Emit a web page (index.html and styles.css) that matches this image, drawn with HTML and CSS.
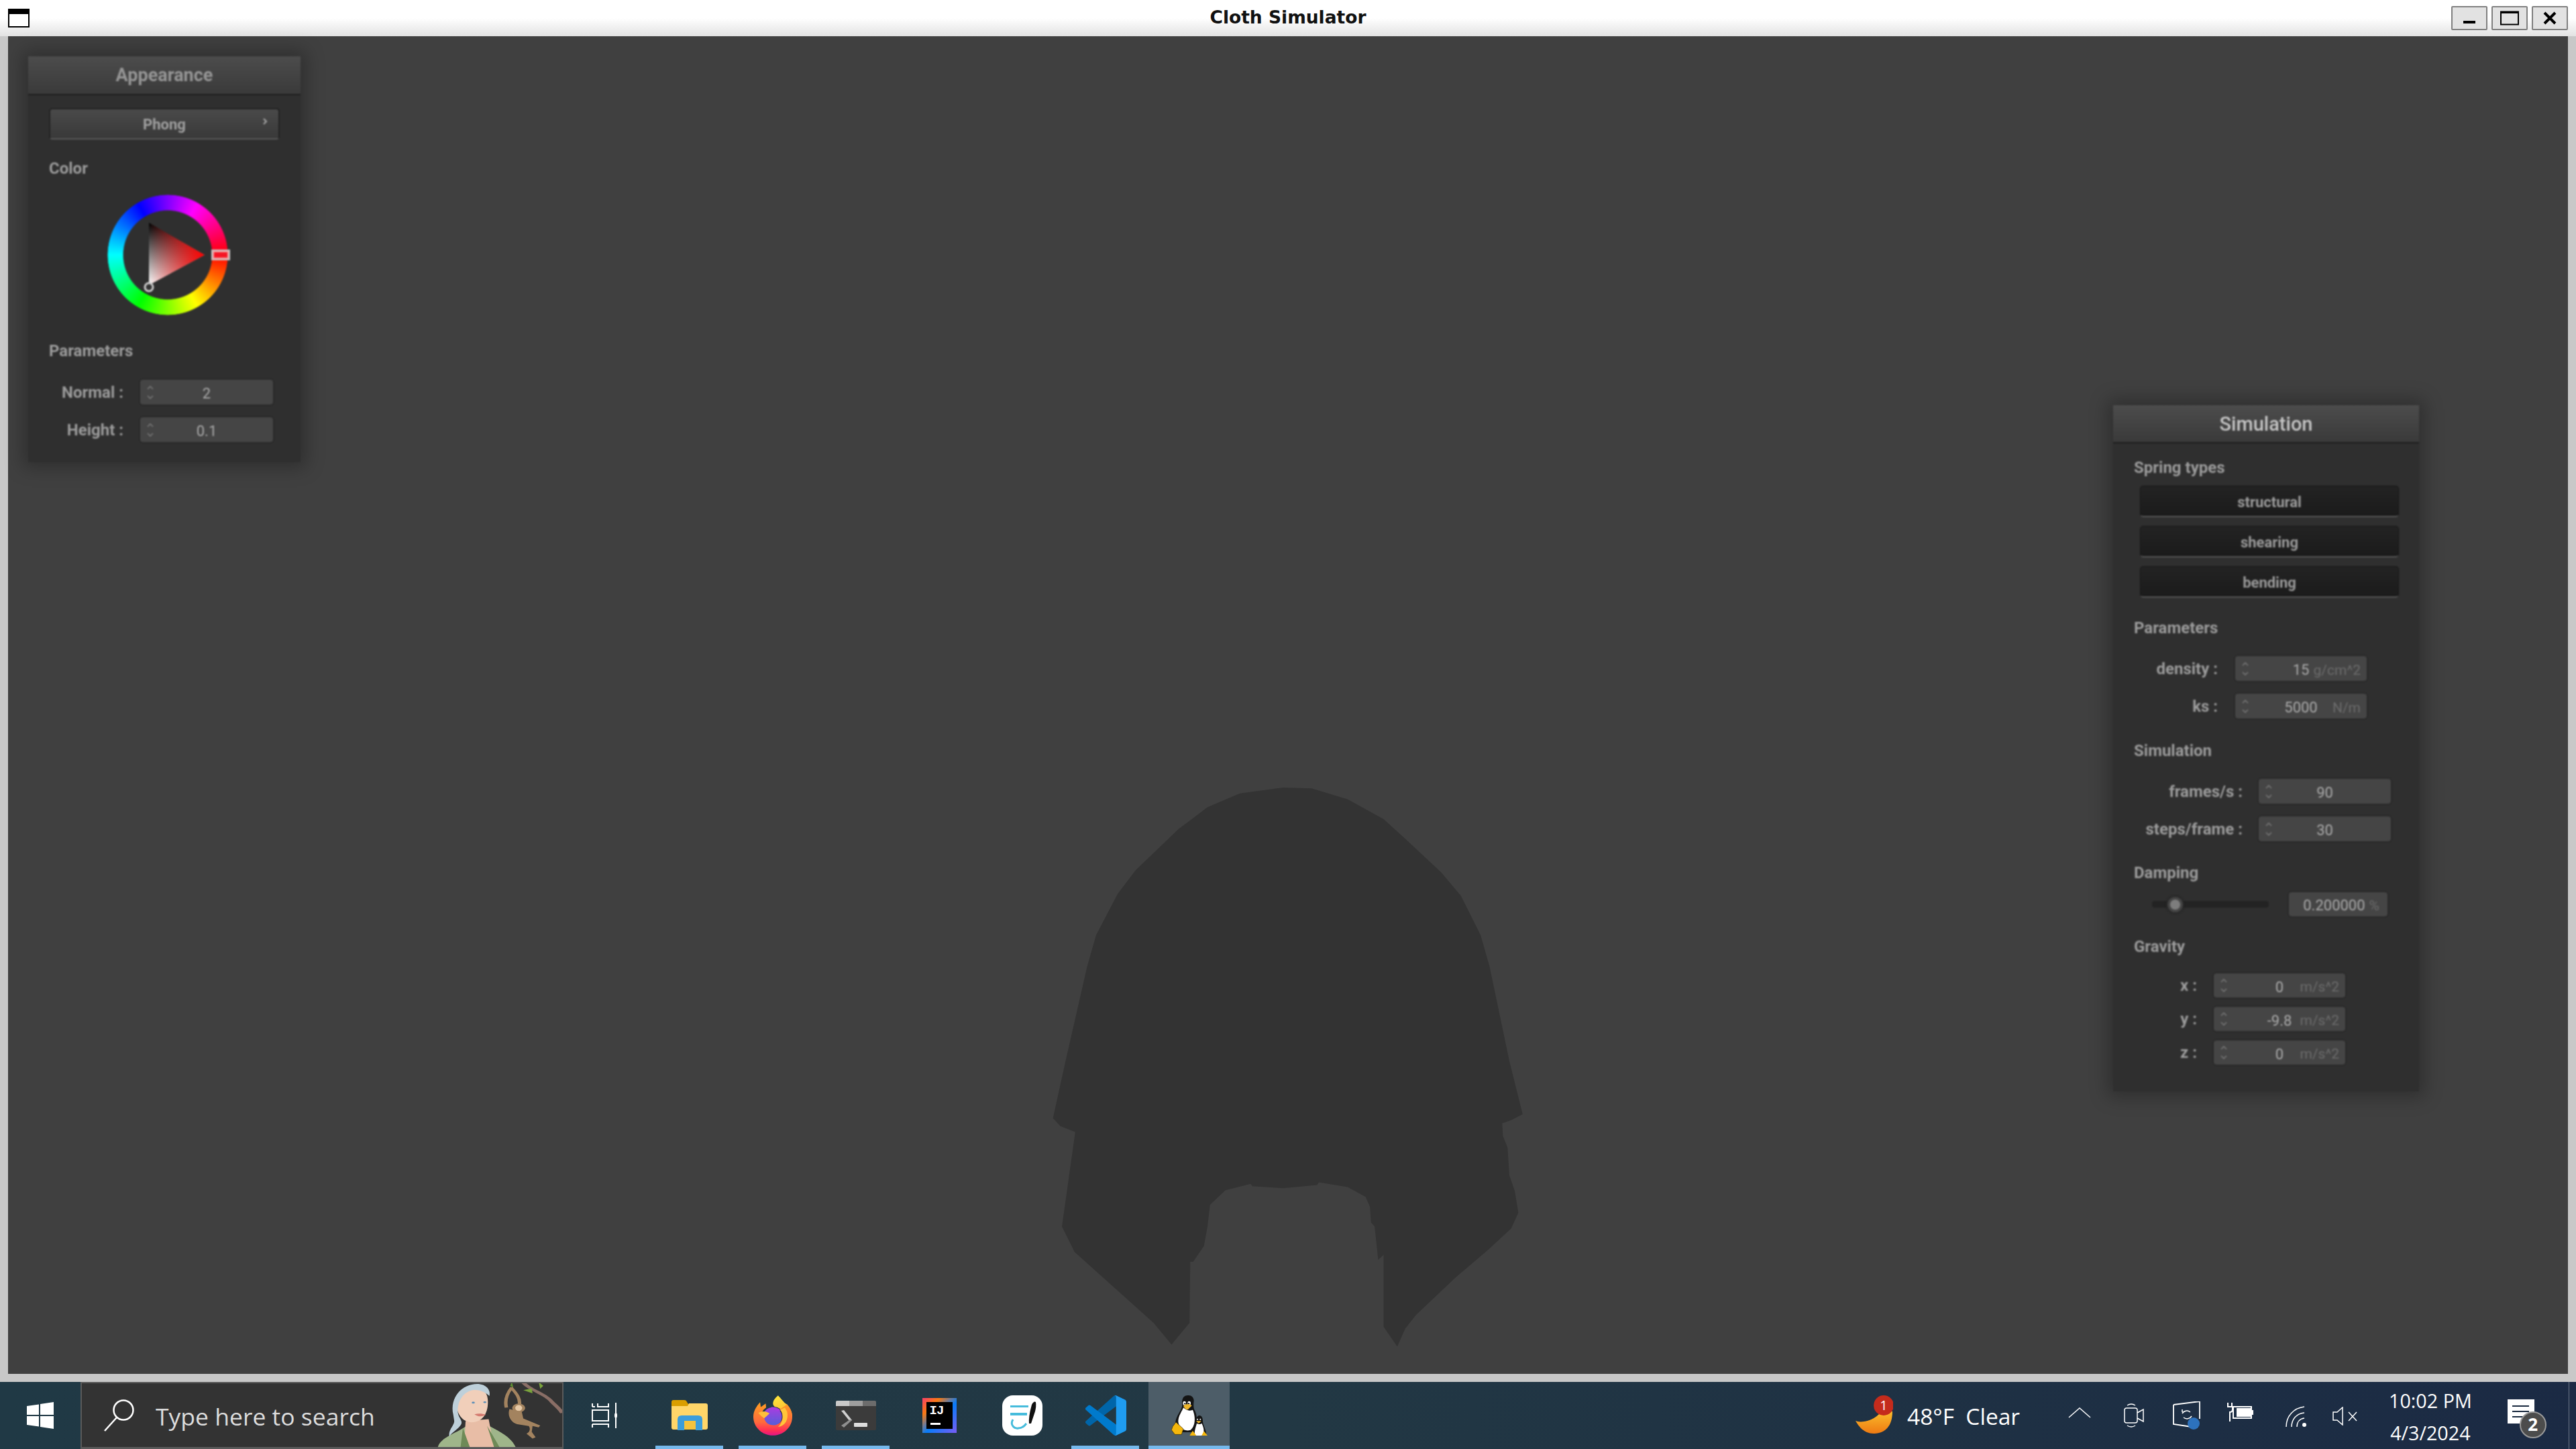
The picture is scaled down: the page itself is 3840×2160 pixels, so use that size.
FILE: index.html
```html
<!DOCTYPE html>
<html lang="en">
<head>
  <meta charset="UTF-8">
  <title>Cloth Simulator</title>
  <link rel="stylesheet" href="styles.css">
</head>
<body>
  <div class="window">
    <div class="titlebar">
      <span class="win-icon"></span>
      <span class="win-title">Cloth Simulator</span>
      <div class="win-buttons">
        <button class="win-btn"><svg width="20" height="20" viewBox="0 0 20 20"><rect x="1" y="14" width="18" height="4"/></svg></button>
        <button class="win-btn"><svg width="28" height="22" viewBox="0 0 28 22"><path d="M1 1.5h26v19H1zM1 3h26" fill="none" stroke="#000" stroke-width="2"/><rect x="1" y="1" width="26" height="3"/></svg></button>
        <button class="win-btn"><svg width="20" height="20" viewBox="0 0 20 20"><path d="M2 2l16 16M18 2L2 18" stroke="#000" stroke-width="4" fill="none"/></svg></button>
      </div>
    </div>

    <div class="canvas">
      <svg class="cloth" width="840" height="920" viewBox="0 0 1568 1568" preserveAspectRatio="none">
        <path fill="#333333" d="M770 75L850 77 950 105 1050 155 1110 205 1210 290 1265 350 1320 450 1345 530 1400 770 1437 905 1405 920 1380 928 1382 960 1395 990 1400 1060 1415 1100 1425 1155 1405 1195 1340 1250 1250 1320 1140 1415 1110 1450 1088 1495 1050 1445 1050 1262 1035 1275 1025 1190 1015 1180 1012 1140 1000 1115 950 1090 870 1078 865 1085 770 1093 685 1088 680 1082 610 1098 567 1135 560 1190 550 1240 520 1280 512 1280 510 1435 460 1490 410 1435 190 1255 155 1190 192 950 150 935 130 915 165 770 225 530 250 450 310 345 360 285 480 180 560 125 650 90Z"/>
      </svg>

      <section class="panel panel-appearance">
        <header class="panel-title">Appearance</header>
        <div class="panel-body">
          <button class="popup-btn"><span class="btn-text">Phong</span><svg class="popup-arrow" width="8" height="12" viewBox="0 0 8 12"><path d="M2 2l4 4-4 4" fill="none" stroke="#aaa" stroke-width="2"/></svg></button>
          <div class="group-label label-color">Color</div>
          <div class="wheel">
            <div class="wheel-ring"></div>
            <svg class="wheel-marks" width="200" height="180" viewBox="160 290 200 180">
              <defs>
                <linearGradient id="tri-grey" x1="0" y1="0" x2="0" y2="1">
                  <stop offset="0" stop-color="#000"/>
                  <stop offset="1" stop-color="#fff"/>
                </linearGradient>
                <linearGradient id="tri-red" x1="0" y1="0" x2="1" y2="0">
                  <stop offset="0" stop-color="#f00" stop-opacity="0"/>
                  <stop offset="1" stop-color="#f00"/>
                </linearGradient>
              </defs>
              <polygon points="222,332 305,380 222,425" fill="url(#tri-grey)"/>
              <polygon points="222,332 305,380 222,425" fill="url(#tri-red)"/>
              <rect x="316" y="373" width="26" height="14" fill="none" stroke="#c4c4c4" stroke-width="2"/>
              <rect x="318" y="375" width="22" height="10" fill="#f51525" stroke="#f5a0a0" stroke-width="2"/>
              <circle cx="222" cy="428" r="6" fill="#333" stroke="#ccc" stroke-width="3"/>
            </svg>
          </div>
          <div class="group-label label-params-a">Parameters</div>
          <div class="field-row fields-a row-first">
            <span class="field-label">Normal :</span>
            <div class="num-box"><svg class="spin" width="10" height="22" viewBox="0 0 10 22"><path d="M1 6l4-4 4 4M1 16l4 4 4-4"/></svg><span class="num-val">2</span></div>
          </div>
          <div class="field-row fields-a row-next">
            <span class="field-label">Height :</span>
            <div class="num-box"><svg class="spin" width="10" height="22" viewBox="0 0 10 22"><path d="M1 6l4-4 4 4M1 16l4 4 4-4"/></svg><span class="num-val">0.1</span></div>
          </div>
        </div>
      </section>

      <section class="panel panel-simulation">
        <header class="panel-title">Simulation</header>
        <div class="panel-body">
          <div class="group-label label-spring">Spring types</div>
          <div class="toggle-list">
            <button class="toggle-btn"><span class="btn-text">structural</span></button>
            <button class="toggle-btn"><span class="btn-text">shearing</span></button>
            <button class="toggle-btn"><span class="btn-text">bending</span></button>
          </div>

          <div class="group-label label-params">Parameters</div>
          <div class="field-row fields-params row-first">
            <span class="field-label">density :</span>
            <div class="num-box"><svg class="spin" width="10" height="22" viewBox="0 0 10 22"><path d="M1 6l4-4 4 4M1 16l4 4 4-4"/></svg><span class="num-val">15</span><span class="num-unit">g/cm^2</span></div>
          </div>
          <div class="field-row fields-params row-next">
            <span class="field-label">ks :</span>
            <div class="num-box"><svg class="spin" width="10" height="22" viewBox="0 0 10 22"><path d="M1 6l4-4 4 4M1 16l4 4 4-4"/></svg><span class="num-val">5000</span><span class="num-unit">N/m</span></div>
          </div>

          <div class="group-label label-sim">Simulation</div>
          <div class="field-row fields-sim row-first">
            <span class="field-label">frames/s :</span>
            <div class="num-box"><svg class="spin" width="10" height="22" viewBox="0 0 10 22"><path d="M1 6l4-4 4 4M1 16l4 4 4-4"/></svg><span class="num-val">90</span></div>
          </div>
          <div class="field-row fields-sim row-next">
            <span class="field-label">steps/frame :</span>
            <div class="num-box"><svg class="spin" width="10" height="22" viewBox="0 0 10 22"><path d="M1 6l4-4 4 4M1 16l4 4 4-4"/></svg><span class="num-val">30</span></div>
          </div>

          <div class="group-label label-damping">Damping</div>
          <div class="slider-row">
            <div class="slider-track"><span class="slider-knob" style="left: 20%"></span></div>
            <div class="slider-value"><span>0.200000</span><span class="num-unit">%</span></div>
          </div>

          <div class="group-label label-gravity">Gravity</div>
          <div class="field-row fields-gravity row-gravity-first">
            <span class="field-label">x :</span>
            <div class="num-box"><svg class="spin" width="10" height="22" viewBox="0 0 10 22"><path d="M1 6l4-4 4 4M1 16l4 4 4-4"/></svg><span class="num-val">0</span><span class="num-unit">m/s^2</span></div>
          </div>
          <div class="field-row fields-gravity row-gravity">
            <span class="field-label">y :</span>
            <div class="num-box"><svg class="spin" width="10" height="22" viewBox="0 0 10 22"><path d="M1 6l4-4 4 4M1 16l4 4 4-4"/></svg><span class="num-val">-9.8</span><span class="num-unit">m/s^2</span></div>
          </div>
          <div class="field-row fields-gravity row-gravity">
            <span class="field-label">z :</span>
            <div class="num-box"><svg class="spin" width="10" height="22" viewBox="0 0 10 22"><path d="M1 6l4-4 4 4M1 16l4 4 4-4"/></svg><span class="num-val">0</span><span class="num-unit">m/s^2</span></div>
          </div>
        </div>
      </section>
    </div>
  </div>

  <footer class="taskbar">
    <div class="start">
      <svg width="40" height="40" viewBox="0 0 40 40"><path fill="#fff" d="M0 6l18-2.6V19H0zM20 3.100L40 0v19H20zM0 21h18v15.600L0 34zM20 21h20v19l-20-3.100z"/></svg>
    </div>

    <div class="search">
      <svg class="search-icon" width="48" height="48" viewBox="0 0 48 48"><circle cx="30" cy="16" r="14.500" fill="none" stroke="#fff" stroke-width="2.500"/><path d="M20 27L2 47" stroke="#fff" stroke-width="2.500" fill="none"/></svg>
      <span class="search-text">Type here to search</span>
      <svg class="doodle" width="191" height="98" viewBox="1130 90 333 295" preserveAspectRatio="none">
        <path fill="none" stroke="#8a6e66" stroke-width="11" d="M1360 92c18 38 60 55 76 90 10 18 20 30 27 50"/>
        <path fill="#7aa33c" d="M1362 130l22-8 2 22zM1402 94l12 16-8 14z"/>
        <path fill="#5d8f33" d="M1332 90l4 28-8-6z"/>
        <path fill="none" stroke="#a3835f" stroke-width="9" d="M1330 118c16 30 24 50 22 76"/>
        <path fill="none" stroke="#a3835f" stroke-width="9" d="M1332 118c-14 30-18 60-14 90"/>
        <ellipse cx="1350" cy="210" rx="17" ry="20" fill="#a3835f"/>
        <ellipse cx="1350" cy="210" rx="9" ry="13" fill="#e6c9a6"/>
        <path fill="#a3835f" d="M1326 215c-6 30 4 60 20 68l30 8c6 10 2 30-6 34l16 22 8-6-10-24 2-26 16 6 4-8-44-32-4-30z"/>
        <path fill="#9fb58a" d="M1140 385c8-45 48-62 72-92l58-6c28 26 60 52 72 98z"/>
        <path fill="#e8bda6" d="M1212 268l-4 117h78l-14-125z"/>
        <path fill="#6e8a57" d="M1205 300l18 85h-24zM1268 290l18 95h14z"/>
        <path fill="#f1cfba" d="M1188 190c0-45 30-70 50-70 22 0 32 24 32 64 0 50-14 90-42 90-24 0-40-40-40-84z"/>
        <path fill="#bed0da" d="M1180 240c-10-80 24-138 62-138 24 0 36 28 32 54-14-22-30-30-44-26-24 8-40 50-38 100 2 30 18 40 4 64-8 16-22 30-26 44-4-34 16-52 12-76z"/>
        <path fill="#d47a70" d="M1235 238c10-4 20-4 30 2-8 10-22 10-30-2z"/>
        <circle cx="1232" cy="186" r="4" fill="#5b8fb8"/><circle cx="1262" cy="184" r="4" fill="#5b8fb8"/>
      </svg>
    </div>

    <div class="tasks">
      <div class="task">
        <svg class="taskview" width="38" height="38" viewBox="0 0 38 38" fill="none" stroke="#fff" stroke-width="2"><path d="M1 6h4M1 1v5M9 1v5h16V1M1 32v5M1 32h24v5M36 0v38"/><rect x="1" y="11" width="24" height="16"/><ellipse cx="36" cy="19" rx="1" ry="3" fill="#fff"/></svg>
      </div>
      <div class="task running">
        <svg width="54" height="46" viewBox="0 0 54 46"><path fill="#d99e00" d="M0 3q0-3 3-3h16q3 0 4 3l2 3h4v5H0z"/><path fill="#ffd669" d="M0 9h24l2-4h25q3 0 3 3v33q0 3-3 3H3q-3 0-3-3z"/><path fill="#3c9ddb" d="M9 45V29q0-6 6-6h25q6 0 6 6v16H36V31H19v14z"/><rect x="19" y="31" width="17" height="13" fill="#f5c33e"/></svg>
      </div>
      <div class="task running">
        <svg width="58" height="60" viewBox="40 30 173 178">
          <defs>
            <linearGradient id="fx-outer" x1="0.500" y1="0" x2="0.500" y2="1"><stop offset="0" stop-color="#ff9f22"/><stop offset=".6" stop-color="#ff6a3c"/><stop offset=".85" stop-color="#ff2d55"/><stop offset="1" stop-color="#e31587"/></linearGradient>
            <linearGradient id="fx-flame" x1="0.300" y1="0" x2="0.700" y2="1"><stop offset="0" stop-color="#ffe53c"/><stop offset="1" stop-color="#ffa62c"/></linearGradient>
            <linearGradient id="fx-orb" x1="0.500" y1="0" x2="0.500" y2="1"><stop offset="0" stop-color="#a93ce0"/><stop offset="1" stop-color="#5160d8"/></linearGradient>
          </defs>
          <path fill="url(#fx-flame)" d="M150 30C125 50 122 70 135 80 165 85 180 105 175 140L213 125C213 95 200 90 190 70 175 62 165 45 150 30Z"/>
          <circle cx="125" cy="125" r="42" fill="url(#fx-orb)"/>
          <path fill="url(#fx-outer)" d="M70 60L73 82 95 66 97 84C80 95 72 110 88 125 90 172 160 176 170 130 172 112 165 100 158 92L190 70C205 85 213 105 213 125 213 170 175 208 127 208 78 208 40 170 40 125 40 100 52 80 70 60Z"/>
          <path fill="#ffbf3a" d="M62 108C80 98 97 100 112 110 104 118 96 124 88 132 80 125 70 118 62 108Z"/>
          <path fill="#ffc53a" d="M160 94C176 114 174 150 150 170 182 166 198 136 190 102L180 84Z"/>
          <path fill="#a93ce0" d="M120 82c15-2 30 4 42 14l-14 4c-8-6-18-10-28-8z"/>
        </svg>
      </div>
      <div class="task running">
        <svg width="60" height="44" viewBox="0 0 60 44"><rect width="60" height="44" rx="2" fill="#3b3b3b"/><path fill="#c9c9c9" d="M0 2q0-2 2-2h18v8H0z"/><rect x="20" width="20" height="8" fill="#9e9e9e"/><path fill="#6c6c6c" d="M40 0h18q2 0 2 2v6H40z"/><path fill="#cfcfcf" d="M8 15l4-1 12 15-3 2z"/><path fill="#8f8f8f" d="M8 37l13-9 3 1-12 11z"/><rect x="27" y="33" width="20" height="6" rx="1" fill="#ddd"/></svg>
      </div>
      <div class="task">
        <div class="ij-icon"><div class="ij-inner"><span class="ij-text">IJ</span><span class="ij-bar"></span></div></div>
      </div>
      <div class="task">
        <svg width="60" height="60" viewBox="0 0 60 60"><rect width="60" height="60" rx="16" fill="#fff"/><rect x="12" y="15" width="27" height="3" fill="#46bcdc"/><rect x="12" y="26" width="25" height="4" fill="#46bcdc"/><path fill="#111" d="M44 14q3-6 6-4 1 6-1 14l-6 18-3 0q-1-10 4-28z"/><path fill="none" stroke="#46bcdc" stroke-width="3" d="M16 36c-5 8 2 14 8 13 5 0 9-3 12-7"/></svg>
      </div>
      <div class="task running">
        <svg width="61" height="60" viewBox="0 0 100 100" preserveAspectRatio="none">
          <path fill="#0065a9" d="M96.46 10.8 75.86.87c-2.39-1.15-5.24-.66-7.11 1.21L1.3 63.58c-1.81 1.65-1.81 4.51.01 6.16l5.51 5.01c1.49 1.35 3.72 1.45 5.32.24L93.36 13.37c2.72-2.07 6.64-.12 6.64 3.3v-.24c0-2.4-1.37-4.58-3.54-5.63z"/>
          <path fill="#007acc" d="M96.46 89.2 75.86 99.13c-2.39 1.15-5.24.66-7.11-1.21L1.3 36.42c-1.81-1.65-1.81-4.51.01-6.16l5.51-5.01c1.49-1.35 3.72-1.45 5.32-.24L93.36 86.63c2.72 2.07 6.64.12 6.64-3.3v.24c0 2.4-1.37 4.58-3.54 5.63z"/>
          <path fill="#1f9cf0" d="M75.86 99.13c-2.39 1.15-5.24.66-7.11-1.21 2.31 2.31 6.25.67 6.25-2.59V4.67c0-3.26-3.94-4.9-6.25-2.59 1.87-1.87 4.72-2.36 7.11-1.21l20.6 9.91c2.16 1.04 3.54 3.22 3.54 5.63v67.17c0 2.4-1.37 4.58-3.54 5.63z"/>
        </svg>
      </div>
      <div class="task running active">
        <svg width="54" height="60" viewBox="55 30 160 180">
          <path fill="#141414" d="M130 30C105 30 100 50 103 75 100 100 75 120 72 155L85 195H150C165 170 175 130 160 100 150 85 155 60 155 55 155 40 145 30 130 30Z"/>
          <path fill="#fff" d="M108 85C125 100 135 100 150 95 165 130 160 170 140 185 110 195 85 170 85 145 87 120 100 105 108 85Z"/>
          <ellipse cx="113" cy="65" rx="7" ry="9" fill="#fff"/><ellipse cx="134" cy="65" rx="7" ry="9" fill="#fff"/>
          <circle cx="115" cy="67" r="3.500"/><circle cx="132" cy="67" r="3.500"/>
          <path fill="#eeb52a" d="M108 77C120 66 135 68 146 76L128 94C120 95 112 86 108 77Z"/>
          <path fill="#f5b70c" stroke="#3a2a00" stroke-width="2" d="M75 150L108 180 100 205 70 205 55 185 60 170Z"/>
          <path fill="#141414" d="M178 120C165 125 165 140 160 155 150 175 145 190 150 208H210C212 185 195 165 195 145 195 130 190 120 178 120Z"/>
          <path fill="#fff" d="M168 155C175 160 185 160 190 155 200 175 205 195 190 210H160C155 190 165 170 168 155Z"/>
          <path fill="#eeb52a" d="M165 145H188L177 156Z"/>
          <circle cx="171" cy="137" r="3" fill="#fff"/><circle cx="184" cy="137" r="3" fill="#fff"/>
          <path fill="#f5b70c" d="M136 210L150 188 166 210ZM190 210L200 190 216 210Z"/>
        </svg>
      </div>
    </div>

    <div class="tray">
      <div class="weather">
        <svg class="weather-icon" width="56" height="58" viewBox="0 0 56 58">
          <defs><linearGradient id="moon" x1="0" y1="0" x2="0" y2="1"><stop offset="0" stop-color="#fbc02d"/><stop offset="1" stop-color="#ee7a12"/></linearGradient></defs>
          <path fill="url(#moon)" d="M0 38C8 42 30 38 40 22L55 24C55 45 45 57 27 57 12 57 4 45 0 38Z"/>
          <circle cx="42" cy="15" r="15" fill="#c42b1c"/>
        </svg>
        <span class="weather-badge">1</span>
        <span class="weather-text">48°F&nbsp; Clear</span>
      </div>
      <svg class="tray-chevron" width="34" height="16" viewBox="0 0 34 16"><path d="M1 15L17 1l16 14" fill="none" stroke="#fff" stroke-width="1.500"/></svg>
      <svg class="tray-icon tray-meet" width="30" height="36" viewBox="0 0 30 36" fill="none" stroke="#fff" stroke-width="1.500"><rect x="1" y="7" width="19" height="22" rx="3"/><path d="M20 14l9-5v18l-9-5M5 3q6-4 12 0M5 33q6 4 12 0"/></svg>
      <svg class="tray-icon tray-update" width="42" height="42" viewBox="0 0 42 42"><path fill="none" stroke="#fff" stroke-width="1.800" d="M1 5L40 0v26M28 38L1 34V5"/><path fill="none" stroke="#fff" stroke-width="1.500" d="M14 18a8 8 0 0 1 12-2M14 16v-4M28 22a8 8 0 0 1-12 2"/><circle cx="31" cy="33" r="9" fill="#2d72bd"/></svg>
      <svg class="tray-icon tray-power" width="40" height="28" viewBox="0 0 40 28" fill="none" stroke="#fff" stroke-width="2"><path d="M1 0v6M7 0v6M0 6h8v4q0 4-4 4v14"/><rect x="9" y="6" width="27" height="17"/><rect x="15" y="9" width="21" height="11" fill="#fff"/><rect x="37" y="11" width="2" height="7" fill="#fff" stroke="none"/></svg>
      <svg class="tray-icon tray-wifi" width="32" height="32" viewBox="0 0 32 32" fill="none" stroke="#fff" stroke-width="1.500"><path d="M1 31C1 15 12 3 28 1M9 31C9 20 16 11 28 10M17 31c0-7 4-12 11-13"/><circle cx="28" cy="28" r="3" fill="#fff" stroke="none"/></svg>
      <svg class="tray-icon tray-volume" width="38" height="28" viewBox="0 0 38 28" fill="none" stroke="#fff" stroke-width="1.500"><path d="M1 8h6L15 1v26l-8-7H1zM24 8l12 13M36 8L24 21"/></svg>
      <div class="clock">
        <span>10:02 PM</span>
        <span>4/3/2024</span>
      </div>
      <div class="notify">
        <svg width="40" height="36" viewBox="0 0 40 36"><rect width="40" height="36" fill="#fff"/><path d="M7 10h25M7 18h25M7 26h17" stroke="#1a2a40" stroke-width="2"/></svg>
        <span class="notify-badge">2</span>
      </div>
      <div class="show-desktop"></div>
    </div>
  </footer>
</body>
</html>
```

FILE: styles.css
```css
* {
  box-sizing: border-box;
}

html, body {
  margin: 0;
  padding: 0;
  width: 3840px;
  height: 2160px;
  overflow: hidden;
}

body {
  font-family: Roboto, "Liberation Sans", sans-serif;
  background: #c8c8c8;
  display: flex;
  flex-direction: column;
}

button {
  font-family: inherit;
  padding: 0;
}

/* window frame */
.window {
  height: 2060px;
  display: flex;
  flex-direction: column;
  background: #c8c8c8;
  border-bottom: 12px solid #c8c8c8;
}

.titlebar {
  height: 54px;
  flex: none;
  display: flex;
  align-items: center;
  position: relative;
  padding: 0 12px;
  background: linear-gradient(#ffffff 0%, #ffffff 50%, #e2e2e2 100%);
}

.win-icon {
  width: 32px;
  height: 28px;
  border: 2px solid #000;
  border-top-width: 8px;
  background: #fff;
}

.win-title {
  position: absolute;
  left: 0;
  right: 0;
  top: 10px;
  text-align: center;
  font-family: "DejaVu Sans", sans-serif;
  font-weight: bold;
  font-size: 26.500px;
  line-height: 32px;
  color: #111;
}

.win-buttons {
  margin-left: auto;
  display: flex;
  gap: 6px;
}

.win-btn {
  width: 54px;
  height: 36px;
  display: flex;
  align-items: center;
  justify-content: center;
  background: #e2e2e2;
  border: 2px solid #808080;
  border-radius: 2px;
}

.canvas {
  flex: 1;
  margin: 0 12px;
  background: #404040;
  position: relative;
}

.cloth {
  position: absolute;
  left: 1488px;
  top: 1076px;
}

/* nanogui-like panels */
.panel {
  position: absolute;
  background: #2f2f2f;
  box-shadow: 0 0 26px 8px rgba(0, 0, 0, 0.28);
  filter: blur(0.8px);
}

.panel-appearance {
  left: 30px;
  top: 30px;
  width: 406px;
}

.panel-simulation {
  left: 3138px;
  top: 550px;
  width: 456px;
}

.panel-title {
  height: 58px;
  display: flex;
  align-items: center;
  justify-content: center;
  background: linear-gradient(#4c4c4c, #3a3a3a);
  border-bottom: 2px solid #1e1e1e;
  font-weight: 700;
  font-size: 27px;
  color: #969696;
}

.panel-simulation .panel-title {
  height: 57px;
  font-weight: 500;
  font-size: 29px;
  color: #c6c6c6;
}

.panel-body {
  padding: 0 0 30px 31px;
}

.panel-simulation .panel-body {
  padding-bottom: 40px;
}

.group-label {
  height: 28px;
  line-height: 28px;
  font-weight: 700;
  font-size: 24px;
  color: #9c9c9c;
}

.label-color { margin-top: 29px; }
.label-params-a { margin-top: 39px; }
.label-spring { margin-top: 22px; }
.label-params { margin-top: 31px; }
.label-sim { margin-top: 34px; }
.label-damping { margin-top: 33px; }
.label-gravity { margin-top: 31px; }

.btn-text {
  position: relative;
  top: 1px;
}

.popup-btn {
  position: relative;
  display: block;
  margin-top: 19px;
  width: 344px;
  height: 47px;
  background: linear-gradient(#4a4a4a, #393939);
  border: 2px solid #222;
  border-bottom-color: #5a5a5a;
  border-radius: 5px;
  font-size: 22px;
  font-weight: 700;
  color: #a0a0a0;
}

.popup-arrow {
  position: absolute;
  right: 16px;
  top: 12px;
}

/* colour wheel */
.wheel {
  position: relative;
  width: 180px;
  height: 180px;
  margin: 25px 0 0 87px;
}

.wheel-ring {
  width: 180px;
  height: 180px;
  border-radius: 50%;
  background: conic-gradient(from 90deg, #f00, #ff0, #0f0, #0ff, #00f, #f0f, #f00);
  -webkit-mask: radial-gradient(closest-side, transparent 73%, #000 74.500%, #000 99%, transparent 100%);
  mask: radial-gradient(closest-side, transparent 73%, #000 74.500%, #000 99%, transparent 100%);
}

.wheel-marks {
  position: absolute;
  left: 0;
  top: 0;
}

/* number fields */
.field-row {
  display: grid;
  align-items: center;
  column-gap: 25px;
}

.fields-a { grid-template-columns: 111px 198px; height: 37px; }
.fields-params { grid-template-columns: 125px 196px; column-gap: 26px; height: 37px; }
.fields-sim { grid-template-columns: 162px 197px; column-gap: 24px; height: 37px; }
.fields-gravity { grid-template-columns: 94px 196px; height: 36px; }

.row-first { margin-top: 28px; }
.fields-a.row-first { margin-top: 29px; }
.row-next { margin-top: 19px; }
.row-gravity-first { margin-top: 26px; }
.row-gravity { margin-top: 14px; }

.field-label {
  text-align: right;
  font-weight: 700;
  font-size: 24px;
  color: #9c9c9c;
}

.num-box {
  height: 100%;
  position: relative;
  display: flex;
  align-items: center;
  justify-content: center;
  padding-top: 4px;
  background: #454545;
  border-radius: 4px;
  box-shadow: 0 0 0 2px #292929;
  font-size: 22px;
}

.spin {
  position: absolute;
  left: 10px;
  top: 50%;
  margin-top: -11px;
  fill: none;
  stroke: #7c7c7c;
  stroke-width: 1.500;
}

.num-val {
  color: #ababab;
}

.num-unit {
  color: #6c6c6c;
  font-size: 21px;
}

.num-box .num-unit {
  position: absolute;
  right: 9px;
}

/* spring toggles */
.toggle-list {
  display: flex;
  flex-direction: column;
  gap: 13px;
  margin: 13px 0 0 9px;
}

.toggle-btn {
  width: 386px;
  height: 47px;
  background: linear-gradient(#232323, #1b1b1b);
  border: 1px solid #151515;
  border-bottom: 2px solid #555;
  border-radius: 5px;
  font-size: 22px;
  font-weight: 700;
  color: #9c9c9c;
}

/* damping slider */
.slider-row {
  display: flex;
  align-items: center;
  height: 36px;
  margin-top: 15px;
  padding-left: 27px;
}

.slider-track {
  position: relative;
  width: 174px;
  height: 10px;
  background: #232323;
  border-radius: 4px;
}

.slider-knob {
  position: absolute;
  top: 50%;
  width: 23px;
  height: 23px;
  margin: -11.500px 0 0 -11.500px;
  border-radius: 50%;
  background: radial-gradient(circle, #7d7d7d 0 42%, #444 50% 100%);
  box-shadow: 0 0 3px 2px #262626;
}

.slider-value {
  margin-left: 30px;
  width: 147px;
  height: 100%;
  display: flex;
  align-items: center;
  justify-content: flex-end;
  gap: 6px;
  padding: 3px 12px 0 0;
  background: #454545;
  border-radius: 4px;
  box-shadow: 0 0 0 2px #292929;
  font-size: 22px;
  color: #ababab;
}

/* windows taskbar */
.taskbar {
  height: 100px;
  flex: none;
  display: flex;
  background: linear-gradient(90deg, #203945 0%, #223844 50%, #1b2a44 100%);
  color: #fff;
}

.start {
  width: 120px;
  display: flex;
  align-items: center;
  justify-content: center;
}

.search {
  width: 720px;
  display: flex;
  align-items: center;
  padding-left: 32px;
  background: #333333;
  border: 2px solid #5a5a5a;
  border-bottom-width: 3px;
  overflow: hidden;
}

.search-text {
  margin: 3px 0 0 30px;
  font-family: "Open Sans", sans-serif;
  font-size: 35.500px;
  color: #dcdcdc;
}

.doodle {
  margin-left: auto;
  align-self: flex-end;
  flex: none;
}

.tasks {
  display: flex;
  padding-left: 2px;
}

.task {
  width: 124px;
  display: flex;
  align-items: center;
  justify-content: center;
  position: relative;
}

.taskview {
  margin-left: -6px;
}

.task.running::after {
  content: "";
  position: absolute;
  left: 11px;
  right: 12px;
  bottom: 0;
  height: 5px;
  background: #76b9ed;
}

.task.active {
  width: 121px;
  margin-left: 2px;
  background: #4d5d68;
}

.task.active::after {
  left: 0;
  right: 0;
}

.ij-icon {
  width: 51px;
  height: 52px;
  padding: 6px;
  background: linear-gradient(135deg, #fa3f6a, #f97a12 25%, #087cfa 55%, #7b5cf5);
}

.ij-inner {
  width: 100%;
  height: 100%;
  background: #000;
  position: relative;
  padding: 4px 0 0 5px;
}

.ij-text {
  display: block;
  font-family: "Liberation Mono", monospace;
  font-weight: bold;
  font-size: 19px;
  line-height: 19px;
  letter-spacing: -1px;
  color: #fff;
}

.ij-bar {
  position: absolute;
  left: 6px;
  bottom: 6px;
  width: 15px;
  height: 3px;
  background: #fff;
}

.tray {
  flex: 1;
  position: relative;
  display: flex;
  align-items: center;
}

.weather {
  position: relative;
  margin-left: 933px;
  display: flex;
  align-items: center;
  height: 100%;
}

.weather-icon {
  margin-top: -3px;
  display: block;
}

.weather-badge {
  position: absolute;
  left: 27px;
  top: 20px;
  width: 30px;
  line-height: 30px;
  font-size: 20px;
  font-family: "Open Sans", sans-serif;
  text-align: center;
}

.weather-text {
  margin: 2px 0 0 21px;
  font-family: "Open Sans", sans-serif;
  font-size: 33.500px;
  white-space: nowrap;
}

.tray-chevron { margin-left: 72px; margin-top: -8px; }
.tray-meet { margin-left: 49px; }
.tray-update { margin-left: 43px; }
.tray-power { margin-left: 39px; margin-top: -10px; }
.tray-wifi { margin-left: 47px; margin-top: 4px; }
.tray-volume { margin-left: 38px; margin-top: 2px; }

.clock {
  margin: 4px 0 0 46px;
  display: flex;
  flex-direction: column;
  align-items: center;
  gap: 18px;
  font-family: "Open Sans", sans-serif;
  font-size: 28.700px;
  line-height: 30px;
  white-space: nowrap;
}

.notify {
  position: relative;
  margin-left: 53px;
  margin-top: -12px;
}

.notify svg {
  display: block;
}

.notify-badge {
  position: absolute;
  left: 18px;
  top: 18px;
  width: 40px;
  height: 40px;
  border-radius: 50%;
  background: #4c4c4c;
  border: 2px solid #999;
  font-weight: 700;
  font-family: "Open Sans", sans-serif;
  font-size: 26px;
  line-height: 34px;
  text-align: center;
}

.show-desktop {
  position: absolute;
  right: 10px;
  top: 0;
  bottom: 0;
  width: 1px;
  background: #6c7888;
}
```
